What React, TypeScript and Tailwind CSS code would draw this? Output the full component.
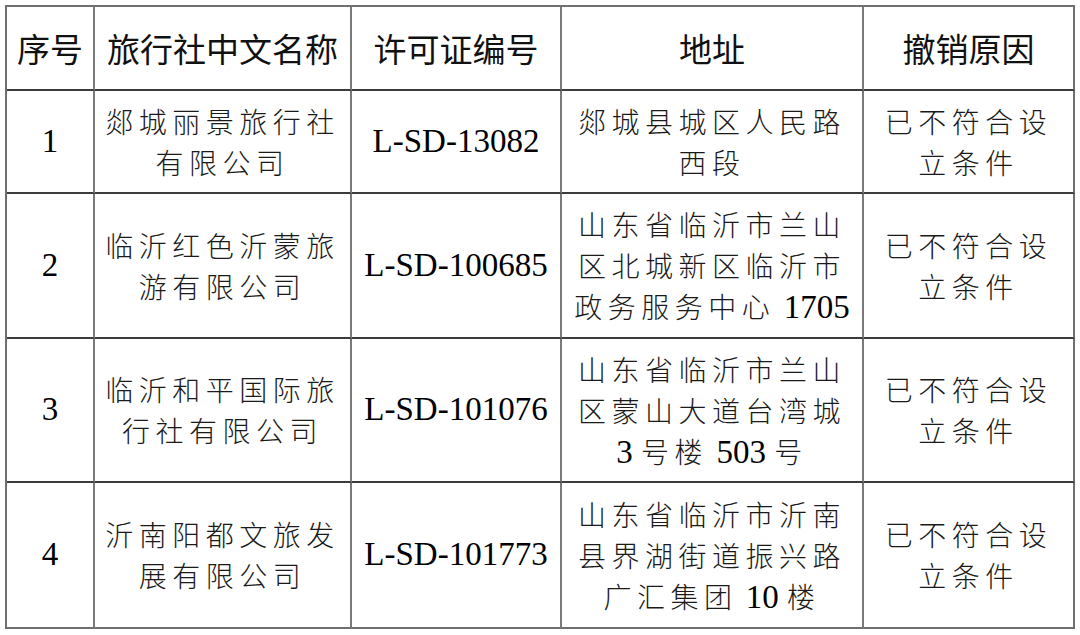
import React from "react";

type Row = {
  no: string;
  name: string[];
  license: string;
  address: string[];
  reason: string[];
  h: string;
};

const rows: Row[] = [
  {
    no: "1",
    name: ["郯城丽景旅行社", "有限公司"],
    license: "L-SD-13082",
    address: ["郯城县城区人民路", "西段"],
    reason: ["已不符合设", "立条件"],
    h: "h-[103px]",
  },
  {
    no: "2",
    name: ["临沂红色沂蒙旅", "游有限公司"],
    license: "L-SD-100685",
    address: ["山东省临沂市兰山", "区北城新区临沂市", "政务服务中心 1705"],
    reason: ["已不符合设", "立条件"],
    h: "h-[145px]",
  },
  {
    no: "3",
    name: ["临沂和平国际旅", "行社有限公司"],
    license: "L-SD-101076",
    address: ["山东省临沂市兰山", "区蒙山大道台湾城", "3 号楼 503 号"],
    reason: ["已不符合设", "立条件"],
    h: "h-[144px]",
  },
  {
    no: "4",
    name: ["沂南阳都文旅发", "展有限公司"],
    license: "L-SD-101773",
    address: ["山东省临沂市沂南", "县界湖街道振兴路", "广汇集团 10 楼"],
    reason: ["已不符合设", "立条件"],
    h: "h-[146px]",
  },
];

const serif = "font-['Liberation_Serif','Times_New_Roman',serif]";
const cjk = "font-['Noto_Sans_CJK_SC',sans-serif]";

// split a line into latin/digit runs (Times) and CJK runs
function Line({ text }: { text: string }) {
  const parts = text.split(/([0-9A-Za-z\- ]+)/).filter((p) => p !== "");
  return (
    <div className={`${cjk} text-[28px] leading-[41px] whitespace-pre`}>
      {parts.map((p, i) =>
        /^[0-9A-Za-z\- ]+$/.test(p) ? (
          <span key={i} className={`${serif} text-[33px] leading-none tracking-normal text-black`}>
            {p}
          </span>
        ) : (
          <span key={i} className="leading-none font-light tracking-[5.5px] text-[#1a1a1a]">
            {p}
          </span>
        )
      )}
    </div>
  );
}

const cell =
  "flex flex-col items-center justify-center text-center border-r-2 border-b-2 border-r-[#7a7a7a] border-b-[#3c3c3c]";
const widths = ["w-[88px]", "w-[257px]", "w-[210px]", "w-[302px]", "w-[211px]"];

export default function App() {
  const headers = ["序号", "旅行社中文名称", "许可证编号", "地址", "撤销原因"];
  return (
    <div className="w-[1080px] h-[635px] bg-white pt-[5px] pl-[5px]">
      <div className="w-[1070px] border-l-2 border-t-2 border-[#707070]">
        <div className="flex h-[84px]">
          {headers.map((t, i) => (
            <div
              key={t}
              className={`${cell} ${widths[i]} ${i === 4 ? "border-r-[#707070]" : ""}`}
            >
              <span className={`${cjk} text-[33px] font-normal text-[#111] leading-none`}>{t}</span>
            </div>
          ))}
        </div>
        {rows.map((r, ri) => (
          <div key={r.no} className={`flex ${r.h}`}>
            <div className={`${cell} ${widths[0]} ${ri === 3 ? "border-b-[#707070]" : ""}`}>
              <span className={`${serif} text-[33px] text-black`}>{r.no}</span>
            </div>
            <div className={`${cell} ${widths[1]} ${ri === 3 ? "border-b-[#707070]" : ""}`}>
              {r.name.map((l) => (
                <Line key={l} text={l} />
              ))}
            </div>
            <div className={`${cell} ${widths[2]} ${ri === 3 ? "border-b-[#707070]" : ""}`}>
              <span className={`${serif} text-[33px] text-black`}>{r.license}</span>
            </div>
            <div className={`${cell} ${widths[3]} ${ri === 3 ? "border-b-[#707070]" : ""}`}>
              {r.address.map((l) => (
                <Line key={l} text={l} />
              ))}
            </div>
            <div className={`${cell} ${widths[4]} border-r-[#707070] ${ri === 3 ? "border-b-[#707070]" : ""}`}>
              {r.reason.map((l) => (
                <Line key={l} text={l} />
              ))}
            </div>
          </div>
        ))}
      </div>
    </div>
  );
}
